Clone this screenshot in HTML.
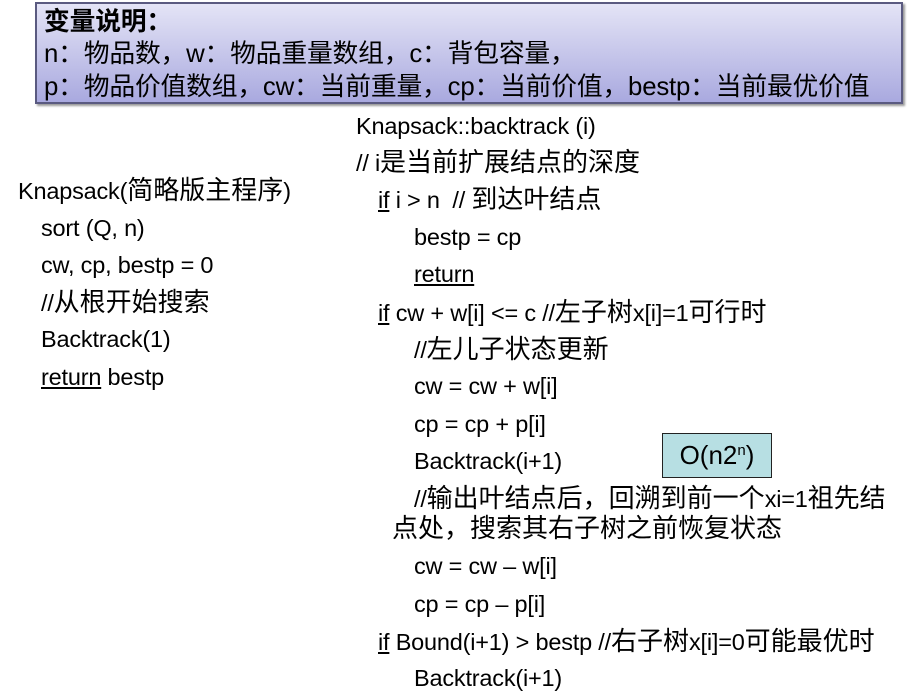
<!DOCTYPE html>
<html><head><meta charset="utf-8"><style>
body{margin:0;width:907px;height:694px;background:#fff;position:relative;overflow:hidden;font-family:"Liberation Sans","Noto Sans CJK SC",sans-serif;color:#000}
.box{position:absolute;left:35px;top:2px;width:868px;height:102px;box-sizing:border-box;border:2px solid #5a5a80;background:linear-gradient(#e4e4f6,#a9a9df);box-shadow:2px 2px 2px #999}
.t{position:absolute;font-size:23.5px;line-height:26px;white-space:nowrap;letter-spacing:-0.2px}
.c{font-size:26px;letter-spacing:0}
.b{font-size:25.8px;letter-spacing:-0.2px}
.u{text-decoration:underline}
.o{position:absolute;left:662px;top:433px;width:110px;height:45px;box-sizing:border-box;border:1.5px solid #222;background:#b7dfe3;font-size:26px;line-height:42px;text-align:center}
</style></head><body>
<div class="box"></div>
<div class="t b" style="left:44px;top:9px;font-weight:bold">变量说明：</div>
<div class="t b" style="left:44px;top:41px">n：物品数，w：物品重量数组，c：背包容量，</div>
<div class="t b" style="left:44px;top:74px">p：物品价值数组，cw：当前重量，cp：当前价值，bestp：当前最优价值</div>

<div class="t" style="left:18px;top:177px">Knapsack(<span class="c">简略版主程序</span>)</div>
<div class="t" style="left:41px;top:215px">sort (Q, n)</div>
<div class="t" style="left:41px;top:252px">cw, cp, bestp = 0</div>
<div class="t" style="left:41px;top:289px">//<span class="c">从根开始搜索</span></div>
<div class="t" style="left:41px;top:326px">Backtrack(1)</div>
<div class="t" style="left:41px;top:364px"><span class="u">return</span> bestp</div>

<div class="t" style="left:356px;top:113px">Knapsack::backtrack (i)</div>
<div class="t" style="left:356px;top:149px">// i<span class="c">是当前扩展结点的深度</span></div>
<div class="t" style="left:378px;top:186px"><span class="u">if</span> i &gt; n&nbsp; // <span class="c">到达叶结点</span></div>
<div class="t" style="left:414px;top:224px">bestp = cp</div>
<div class="t" style="left:414px;top:261px"><span class="u">return</span></div>
<div class="t" style="left:378px;top:299px"><span class="u">if</span> cw + w[i] &lt;= c //<span class="c">左子树</span>x[i]=1<span class="c">可行时</span></div>
<div class="t" style="left:414px;top:336px">//<span class="c">左儿子状态更新</span></div>
<div class="t" style="left:414px;top:373px">cw = cw + w[i]</div>
<div class="t" style="left:414px;top:411px">cp = cp + p[i]</div>
<div class="t" style="left:414px;top:448px">Backtrack(i+1)</div>
<div class="t" style="left:414px;top:485px">//<span class="c">输出叶结点后，回溯到前一个</span>xi=1<span class="c">祖先结</span></div>
<div class="t" style="left:392px;top:515px"><span class="c">点处，搜索其右子树之前恢复状态</span></div>
<div class="t" style="left:414px;top:553px">cw = cw – w[i]</div>
<div class="t" style="left:414px;top:591px">cp = cp – p[i]</div>
<div class="t" style="left:378px;top:628px"><span class="u">if</span> Bound(i+1) &gt; bestp //<span class="c">右子树</span>x[i]=0<span class="c">可能最优时</span></div>
<div class="t" style="left:414px;top:665px">Backtrack(i+1)</div>
<div class="o">O(n2<sup style="font-size:15px;vertical-align:9px;line-height:0">n</sup>)</div>
</body></html>
